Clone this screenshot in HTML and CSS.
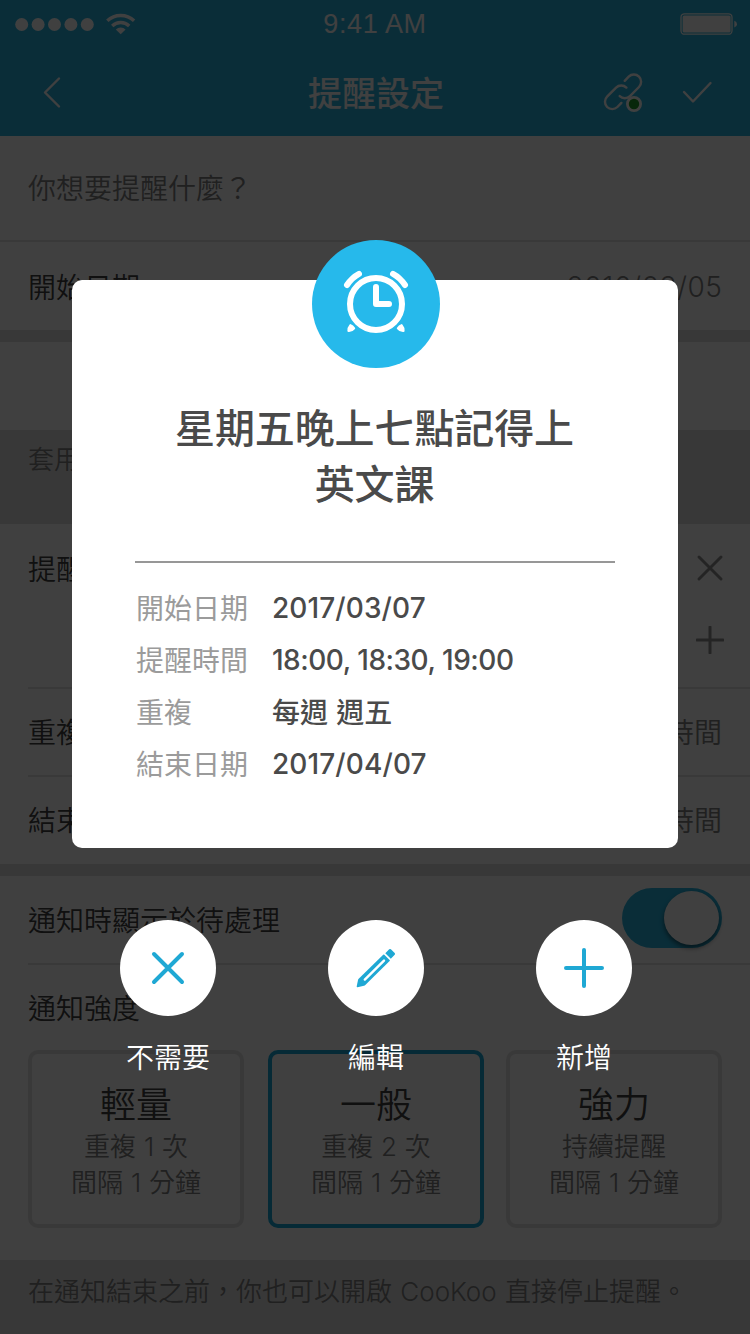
FILE: index.html
```html
<!DOCTYPE html>
<html lang="zh-Hant">
<head>
<meta charset="utf-8">
<title>提醒設定</title>
<link rel="stylesheet" href="styles.css">
</head>
<body>
<div class="screen">
  <header class="top">
    <div class="status">
      <svg class="signal" width="122" height="26" viewBox="0 0 122 26" fill="#fff">
        <circle cx="6.7" cy="13.5" r="6.5"/><circle cx="23.1" cy="13.5" r="6.5"/><circle cx="39.5" cy="13.5" r="6.5"/><circle cx="55.9" cy="13.5" r="6.5"/><circle cx="72.3" cy="13.5" r="6.5"/>
        <g fill="none" stroke="#fff" stroke-width="3.4"><path d="M92.3 9.8a19.4 19.4 0 0 1 26.8 0"/><path d="M97.2 14.9a12.4 12.4 0 0 1 17 0"/></g>
        <path d="M100.8 18.6a7 7 0 0 1 9.8 0l-4.9 4.7z"/>
      </svg>
      <span class="clock">9:41 AM</span>
      <svg class="battery" width="58" height="24" viewBox="0 0 58 24">
        <rect x="1" y="1.8" width="51" height="20.4" rx="3.5" fill="none" stroke="#fff" stroke-width="1.3"/>
        <rect x="2.6" y="3.4" width="48" height="17.2" rx="1.5" fill="#fff"/>
        <path d="M54.3 8.8q2.7 1 2.7 3.4t-2.7 3.4z" fill="#fff"/>
      </svg>
    </div>
    <div class="nav">
      <svg width="40" height="40" viewBox="0 0 40 40" class="line"><path d="M27 6.5 13 20.5 27 34.5"/></svg>
      <h1 class="nav-title">提醒設定</h1>
      <div class="nav-tools">
        <svg width="44" height="44" viewBox="0 0 44 44" class="line">
          <path d="M22.7 10.8l4-4.1a7.3 7.3 0 0 1 10.3 0a7.3 7.3 0 0 1 0 10.3l-9 9.1a7.3 7.3 0 0 1-10.3 0"/>
          <path d="M24.4 17.6a7.3 7.3 0 0 0-10.3 0l-9 9.1a7.3 7.3 0 0 0 0 10.3a7.3 7.3 0 0 0 10.3 0l4-4.1"/>
          <circle cx="32" cy="34" r="6.6" fill="#1c9c28" stroke-width="2.8"/>
        </svg>
        <svg width="32" height="32" viewBox="0 0 32 32" class="line"><path d="M3 16l9 9.5L29.5 7"/></svg>
      </div>
    </div>
  </header>

  <main>
    <div class="row row-ask"><span class="muted">你想要提醒什麼？</span></div>
    <div class="row row-date"><span>開始日期</span><span class="latin value">2016/03/05</span></div>
    <div class="gap"></div>
    <div class="row row-blank"></div>
    <div class="note note-apply">套用</div>
    <div class="times">
      <div class="row row-time"><span>提醒時間</span>
        <svg width="28" height="28" viewBox="0 0 28 28" class="tool"><path d="M3 3l22 22M25 3L3 25"/></svg></div>
      <div class="row row-add">
        <svg width="28" height="28" viewBox="0 0 28 28" class="tool"><path d="M14 1v26M1 14h26"/></svg></div>
    </div>
    <div class="row inset"><span>重複</span><span class="value">時間</span></div>
    <div class="row inset"><span>結束日期</span><span class="value">時間</span></div>
    <div class="gap"></div>
    <div class="row row-toggle"><span class="toggle-label">通知時顯示於待處理</span><span class="toggle"><i class="knob"></i></span></div>
    <section class="strength">
      <h2 class="strength-title">通知強度</h2>
      <div class="levels">
        <div class="level"><b class="name">輕量</b><p class="detail">重複 <span class="latin">1</span> 次</p><p class="detail">間隔 <span class="latin">1</span> 分鐘</p></div>
        <div class="level selected"><b class="name">一般</b><p class="detail">重複 <span class="latin">2</span> 次</p><p class="detail">間隔 <span class="latin">1</span> 分鐘</p></div>
        <div class="level"><b class="name">強力</b><p class="detail">持續提醒</p><p class="detail">間隔 <span class="latin">1</span> 分鐘</p></div>
      </div>
    </section>
    <div class="note note-foot">在通知結束之前，你也可以開啟 <span class="latin">CooKoo</span> 直接停止提醒。</div>
  </main>

  <div class="overlay">
    <section class="dialog">
      <div class="badge">
        <svg width="128" height="128" viewBox="0 0 128 128" fill="none" stroke="#fff" stroke-width="6" stroke-linecap="round" stroke-linejoin="round">
          <circle cx="64" cy="64" r="26"/>
          <path d="M64 47v17h13"/>
          <path d="M35 45q5-7.5 12-11.2M93 45q-5-7.5-12-11.2"/>
          <path d="M38.5 85.3q2 .5 3.5 3-2 2.700-5.400 2.500-.2-3 1.900-5.500zM89.500 85.300q-2 .5-3.500 3 2 2.700 5.400 2.500.2-3-1.900-5.500z" fill="#fff" stroke-width="2.4"/>
        </svg>
      </div>
      <h2 class="dialog-title">星期五晚上七點記得上<br>英文課</h2>
      <dl class="facts">
        <dt>開始日期</dt><dd class="latin">2017/03/07</dd>
        <dt>提醒時間</dt><dd class="latin clock-list">18:00, 18:30, 19:00</dd>
        <dt>重複</dt><dd>每週 週五</dd>
        <dt>結束日期</dt><dd class="latin">2017/04/07</dd>
      </dl>
    </section>
    <nav class="actions">
      <div class="action"><span class="disc"><svg width="96" height="96" viewBox="0 0 96 96" class="glyph"><path d="M34 34l28 28M62 34L34 62"/></svg></span>不需要</div>
      <div class="action"><span class="disc"><svg width="96" height="96" viewBox="0 0 96 96" fill="#1fa8d4">
        <path d="M55.2 34.7q.6-.5 1.1 0l5.300 5.300q.5.600 0 1.100L37.300 65.100q-.6.500-1.300.7l-6.500 1.400q-.9.100-.8-.8l1.300-6.500q.2-.7.700-1.200z"/>
        <path d="M57.300 33.200l3.900-3.900q.9-.7 1.700 0l3.800 3.800q.8.900 0 1.700l-3.900 3.900z"/>
        <path d="M56 40.600L36.800 59.600" stroke="#fff" stroke-width="2.4" stroke-linecap="round"/>
      </svg></span>編輯</div>
      <div class="action"><span class="disc"><svg width="96" height="96" viewBox="0 0 96 96" class="glyph"><path d="M48 30v36M30 48h36"/></svg></span>新增</div>
    </nav>
  </div>
</div>
</body>
</html>
```
FILE: styles.css
```css
* { box-sizing: border-box; margin: 0; padding: 0; }
body {
  width: 750px;
  height: 1334px;
  overflow: hidden;
  font-family: "Noto Sans CJK TC", sans-serif;
  font-size: 28px;
  font-weight: 350;
  color: #404040;
  background: #fff;
}
.screen { position: relative; height: 1334px; overflow: hidden; }
.latin { font-family: Inter, "Noto Sans CJK TC", sans-serif; font-weight: 300; }

.top { height: 136px; background: #28b4e0; color: #fff; }
.status {
  height: 48px;
  padding: 0 12px 0 15px;
  display: grid;
  grid-template-columns: 122px 1fr 122px;
  align-items: center;
}
.clock {
  font: 300 27px "Liberation Sans", sans-serif;
  letter-spacing: .6px;
  text-align: center;
  margin-right: 3px;
}
.battery { justify-self: end; }
.nav {
  height: 88px;
  padding: 0 37px 0 32px;
  display: grid;
  grid-template-columns: 118px 1fr 111px;
  align-items: center;
}
.nav-title { font-size: 34px; font-weight: 500; text-align: center; line-height: 86px; }
.nav-tools { display: flex; justify-content: space-between; align-items: center; }
.line { fill: none; stroke: #fff; stroke-width: 2.4; stroke-linecap: round; stroke-linejoin: round; }

.row {
  height: 88px;
  padding: 0 28px;
  display: flex;
  justify-content: space-between;
  align-items: center;
}
.row-ask { height: 106px; padding-bottom: 2px; border-bottom: 2px solid #e4e4e4; }
.row-date .value { letter-spacing: .6px; padding-top: 2px; margin-right: -.6px; }
.muted, .value { color: #808080; }
.gap { height: 12px; background: #e0e0e0; }
.note { padding: 0 28px; background: #e0e0e0; color: #808080; font-size: 26px; }
.note-apply { height: 94px; line-height: 56px; }
.note-foot { height: 74px; line-height: 60px; word-spacing: 2.5px; }
.times { height: 163px; }
.row-add { height: 56px; justify-content: flex-end; }
.tool { fill: none; stroke: #909090; stroke-width: 3; stroke-linecap: round; margin-right: -2px; }
.inset, .strength {
  background: linear-gradient(#e4e4e4, #e4e4e4) 28px 0 / 722px 2px no-repeat;
}
.inset + .gap { margin-top: 1px; }
.row-toggle { height: 87px; padding-bottom: 3px; }
.toggle-label { padding-top: 2px; }
.toggle {
  width: 100px;
  height: 60px;
  padding: 3px;
  border-radius: 30px;
  background: #28b4e0;
  display: flex;
  justify-content: flex-end;
}
.knob {
  width: 55px;
  height: 54px;
  border-radius: 50%;
  background: #fff;
  box-shadow: 0 3px 5px rgba(0, 0, 0, .5);
}
.strength { height: 297px; padding: 1px 28px 0; }
.strength-title { font-size: 28px; font-weight: 350; line-height: 86px; }
.levels { display: grid; grid-template-columns: repeat(3, 216px); column-gap: 23px; }
.level {
  height: 178px;
  border: 4px solid #e4e4e4;
  border-radius: 10px;
  text-align: center;
  color: #808080;
  font-size: 26px;
  line-height: 36px;
  padding-top: 23px;
}
.level.selected { border-color: #18a8d8; width: 216px; margin-left: 1px; }
.detail { height: 36px; word-spacing: 2px; }
.name { display: block; font-size: 36px; font-weight: 350; line-height: 50px; color: #404040; }

.overlay {
  position: absolute;
  inset: 0;
  background: rgba(0, 0, 0, .75);
  padding-top: 280px;
}
.dialog {
  position: relative;
  width: 606px;
  height: 568px;
  margin-left: 72px;
  padding: 118px 64px 0 63px;
  border-radius: 10px;
  background: #fff;
  color: #4a4a4a;
}
.badge {
  position: absolute;
  left: 240px;
  top: -40px;
  width: 128px;
  height: 128px;
  border-radius: 50%;
  background: #26b9eb;
}
.dialog-title { font-size: 40px; font-weight: 500; line-height: 56px; text-align: center; letter-spacing: -.1px; }
.facts {
  width: 480px;
  margin-top: 51px;
  padding: 18px 1px 0;
  border-top: 2px solid #979797;
  display: grid;
  grid-template-columns: 136px 1fr;
  grid-auto-rows: 52px;
  line-height: 52px;
}
.facts dt { color: #9b9b9b; font-weight: 400; }
.facts dd { font-weight: 500; word-spacing: 2px; }
.facts .latin { font-weight: 450; line-height: 54px; letter-spacing: .1px; word-spacing: 0; }
.facts .clock-list { letter-spacing: -.5px; }
.actions {
  margin-top: 72px;
  padding-left: 120px;
  display: grid;
  grid-template-columns: repeat(3, 96px);
  column-gap: 112px;
}
.action {
  display: flex;
  flex-direction: column;
  align-items: center;
  color: #fff;
  line-height: 80px;
  white-space: nowrap;
}
.disc { width: 96px; height: 96px; border-radius: 50%; background: #fff; display: flex; }
.glyph { fill: none; stroke: #1fa8d4; stroke-width: 4; stroke-linecap: round; }
```
